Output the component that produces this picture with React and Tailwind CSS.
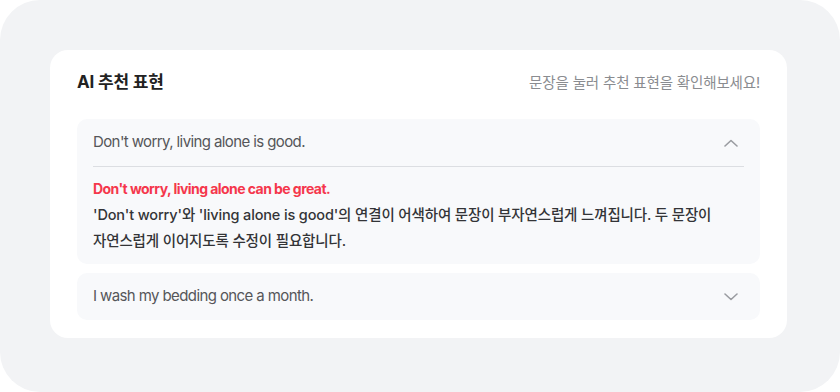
import React, { useState } from "react";

const FONT = { fontFamily: "Inter, 'Noto Sans CJK KR', 'Noto Sans', sans-serif" };

const ITEMS = [
  {
    id: 1,
    original: "Don't worry, living alone is good.",
    suggestion: "Don't worry, living alone can be great.",
    reason:
      "'Don't worry'와 'living alone is good'의 연결이 어색하여 문장이 부자연스럽게 느껴집니다. 두 문장이 자연스럽게 이어지도록 수정이 필요합니다.",
  },
  {
    id: 2,
    original: "I wash my bedding once a month.",
    suggestion: "I wash my bedding once a month.",
    reason: "",
  },
];

function Chevron({ up }) {
  return (
    <svg width="14" height="8" viewBox="0 0 14 8" fill="none">
      <path
        d={up ? "M1 7L7 1.5L13 7" : "M1 1L7 6.5L13 1"}
        stroke="#9a9ca1"
        strokeWidth="1.6"
        strokeLinecap="round"
        strokeLinejoin="round"
      />
    </svg>
  );
}

export default function App() {
  const [openId, setOpenId] = useState(1);

  return (
    <div className="w-[840px] h-[392px] bg-white" style={FONT}>
      <div className="w-full h-full bg-[#f2f3f5] rounded-[40px] pt-[50px] pl-[50px] pr-[53px] pb-[54px]">
        <div className="w-full h-full bg-white rounded-[18px] px-[27px] pt-[21px]">
          <div className="flex items-center justify-between h-[24px] mb-[24px]">
            <h2 className="text-[17px] font-bold text-[#222] tracking-[-0.01em]">AI 추천 표현</h2>
            <p className="text-[14.5px] text-[#8a8c90] tracking-[-0.01em]">문장을 눌러 추천 표현을 확인해보세요!</p>
          </div>

          <div className="flex flex-col gap-[9px]">
            {ITEMS.map((item) => {
              const isOpen = openId === item.id;
              return (
                <div key={item.id} className="bg-[#f8f9fb] rounded-[10px]">
                  <button
                    onClick={() => setOpenId(isOpen ? null : item.id)}
                    className="w-full h-[47px] pl-4 pr-[22px] flex items-center justify-between text-left"
                  >
                    <span className="text-[15px] text-[#555659] tracking-[-0.04em]">{item.original}</span>
                    <Chevron up={isOpen} />
                  </button>
                  {isOpen && (
                    <>
                      <div className="mx-4 h-px bg-[#dcdee2]" />
                      <div className="px-4 pt-[13px] pb-[10px]">
                        <p className="text-[14px] leading-[18px] font-bold text-[#f5374c] tracking-[-0.04em]">
                          {item.suggestion}
                        </p>
                        <p className="mt-[4px] text-[14.5px] leading-[26px] font-medium text-[#333437] tracking-[-0.01em] max-w-[640px] break-keep">
                          {item.reason}
                        </p>
                      </div>
                    </>
                  )}
                </div>
              );
            })}
          </div>
        </div>
      </div>
    </div>
  );
}
